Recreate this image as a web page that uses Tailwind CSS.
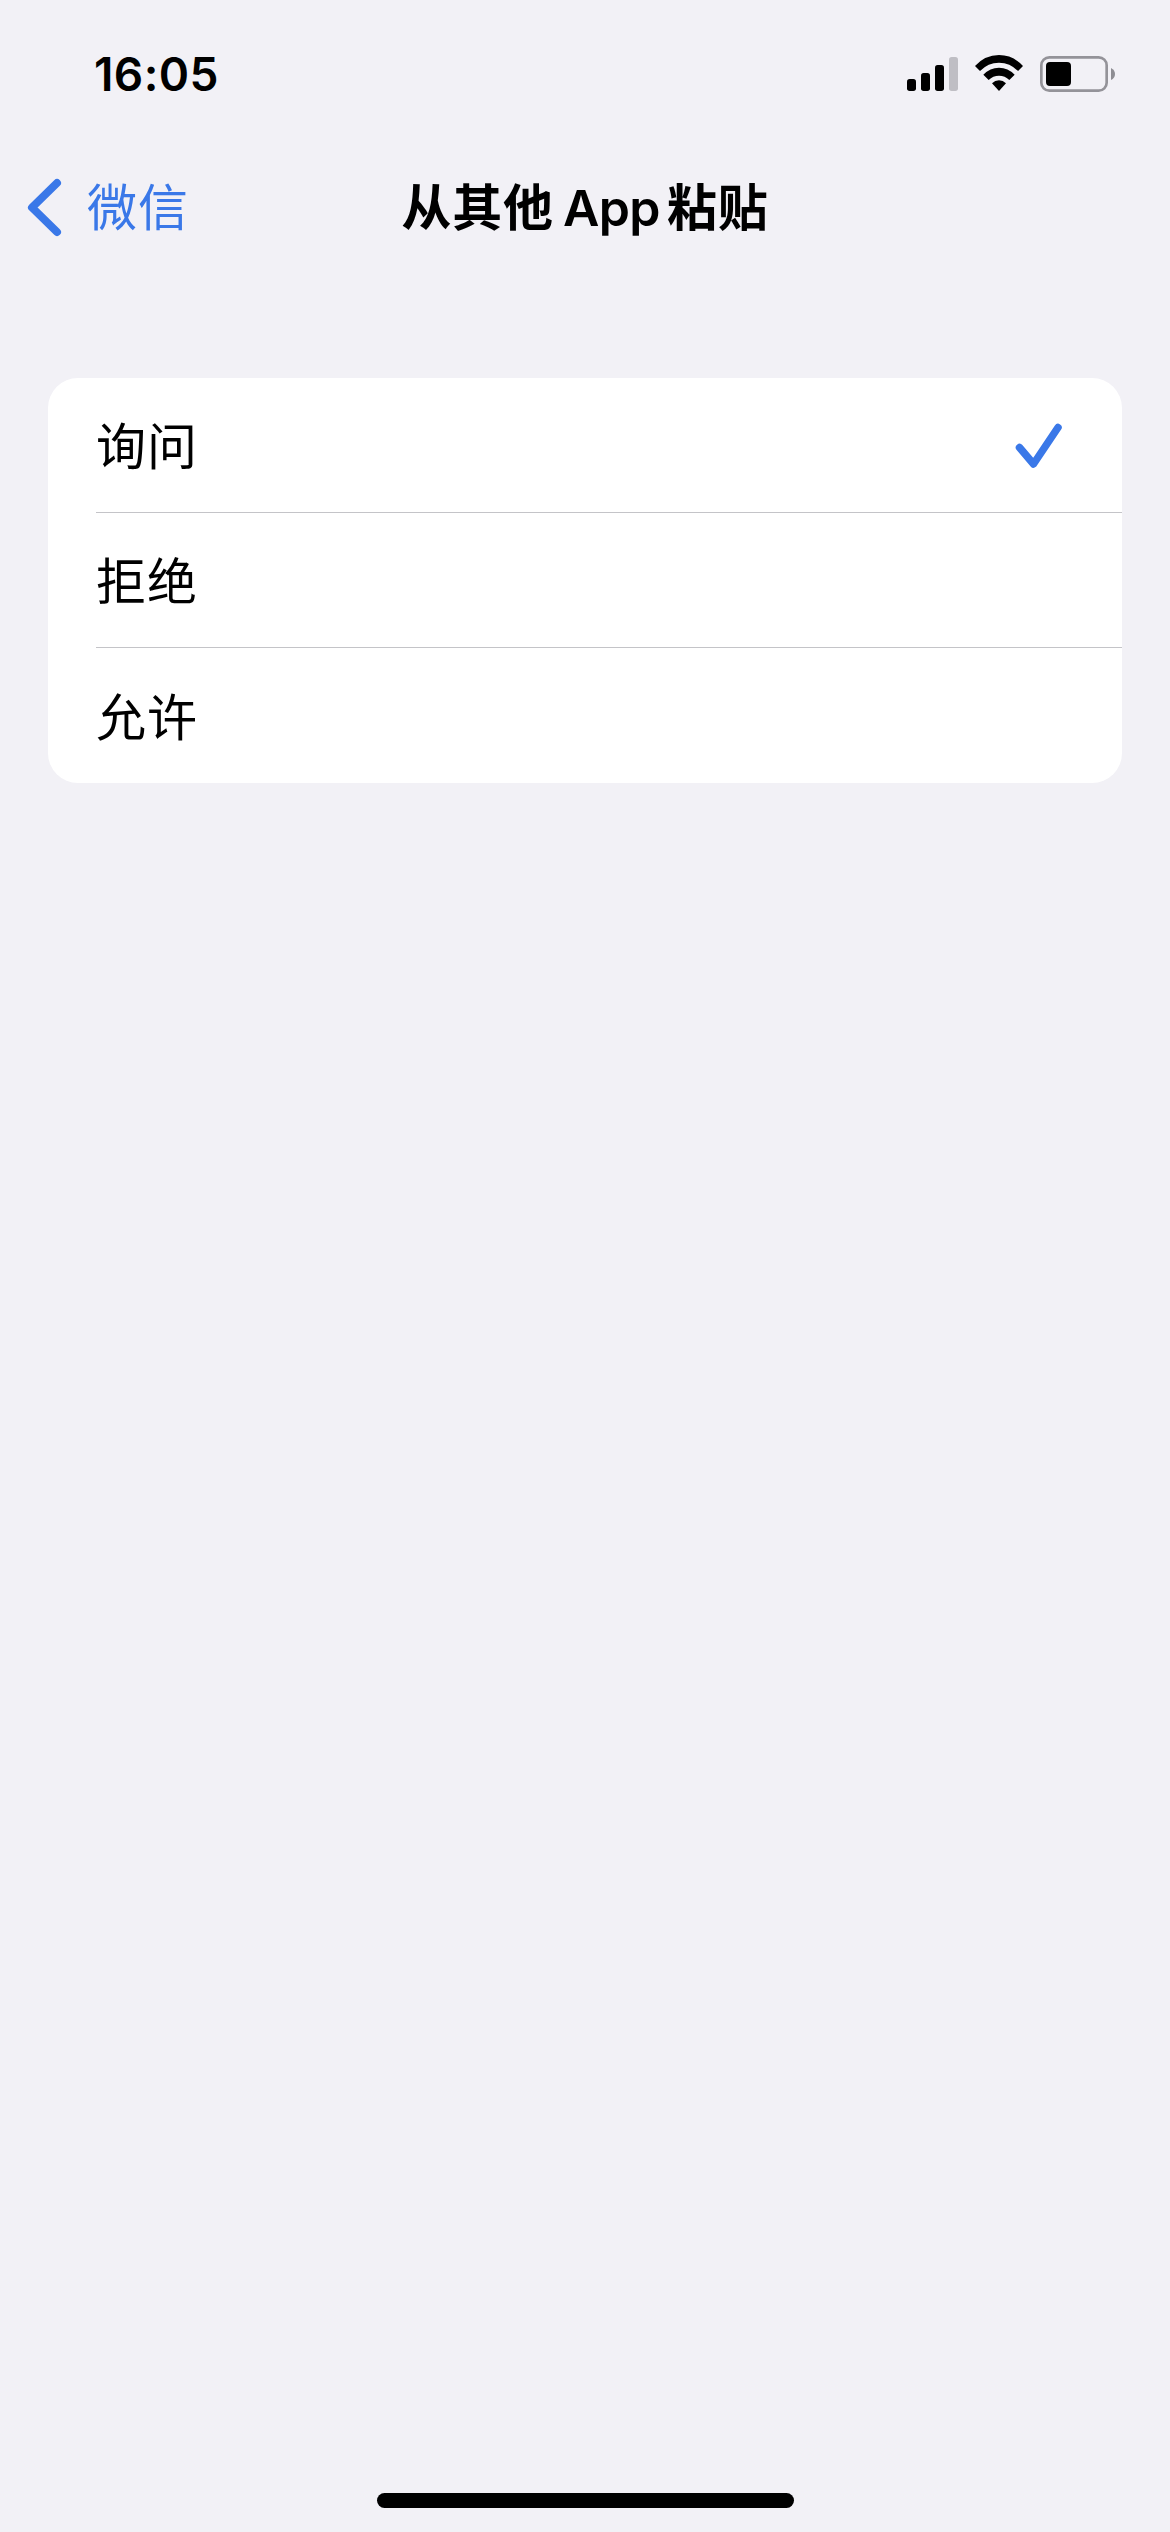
<!DOCTYPE html>
<html lang="zh-CN">
<head>
<meta charset="utf-8">
<title>从其他 App 粘贴</title>
<script src="https://cdn.jsdelivr.net/npm/@tailwindcss/browser@4"></script>
</head>
<body class="flex h-[2532px] w-[1170px] flex-col overflow-hidden bg-[#f2f1f6] font-['Inter','Noto_Sans_CJK_SC',sans-serif] text-black">
  <header class="flex h-[141px] shrink-0 items-start justify-between pt-[30px] pl-[94px] pr-[30px]">
    <time class="text-[46px] leading-[89px] font-semibold tracking-[0.4px]">16:05</time>
    <svg class="h-[90px] w-[260px]" viewBox="0 0 780 270">
      <rect x="81" y="147" width="27" height="36" rx="8"/>
      <rect x="123" y="129" width="27" height="54" rx="8"/>
      <rect x="165" y="105" width="27" height="78" rx="8"/>
      <rect x="207" y="81" width="27" height="102" rx="8" fill="#bfbec4"/>
      <path d="M285 108Q315 75 357 75T429 108L414 123Q390 98 357 98T300 123Z"/>
      <path d="M310 134Q330 113 357 113T404 134L388 150Q375 137 357 137T326 150Z"/>
      <path d="M336 160Q345 151 357 151T378 160L357 183Z"/>
      <rect x="484" y="82" width="196" height="100" rx="24" fill="none" stroke="#949399" stroke-width="8"/>
      <rect x="498" y="96" width="75" height="72" rx="12"/>
      <path d="M693 114Q705 120 705 132T693 150Z" fill="#8e8d93"/>
    </svg>
  </header>
  <nav class="grid h-[132px] shrink-0 grid-cols-[400px_370px_400px] items-center">
    <a class="flex items-center gap-[25px] pl-[26px] text-[#3a78e8]">
      <svg class="h-[60px] w-[36px]" viewBox="0 0 36 60" fill="none" stroke="currentColor" stroke-width="8" stroke-linecap="round" stroke-linejoin="round"><path d="M31 6L6 30.500L31 55"/></svg>
      <span class="pt-[1px] text-[50px] leading-[72px] tracking-[1px]">微信</span>
    </a>
    <h1 class="flex items-center justify-center pt-[1px] text-[50px] leading-[72px] font-semibold whitespace-nowrap"><span class="tracking-[0.8px]">从其他</span><span class="mr-[7px] ml-[9px] tracking-[-0.6px]">App</span><span class="tracking-[0.8px]">粘贴</span></h1>
  </nav>
  <main class="mx-[48px] mt-[105px] flex h-[405px] shrink-0 flex-col rounded-[30px] bg-white pl-[48px] text-[50px] tracking-[1px]">
    <div class="flex h-[135px] items-center justify-between border-b border-[#c4c4c8] pr-[60px]">
      <span class="pt-[5px]">询问</span>
      <svg class="h-[46px] w-[48px]" viewBox="0 0 48 46" fill="none" stroke="#3a78e8" stroke-width="7.500" stroke-linecap="round" stroke-linejoin="round"><path d="M5.500 25.500L19.500 42L44 5.500"/></svg>
    </div>
    <div class="flex h-[135px] items-center border-b border-[#c4c4c8] pt-[5px]">拒绝</div>
    <div class="flex h-[135px] items-center pt-[5px]">允许</div>
  </main>
  <div class="mx-auto mt-auto mb-[24px] h-[15px] w-[417px] shrink-0 rounded-full bg-black"></div>
</body>
</html>
